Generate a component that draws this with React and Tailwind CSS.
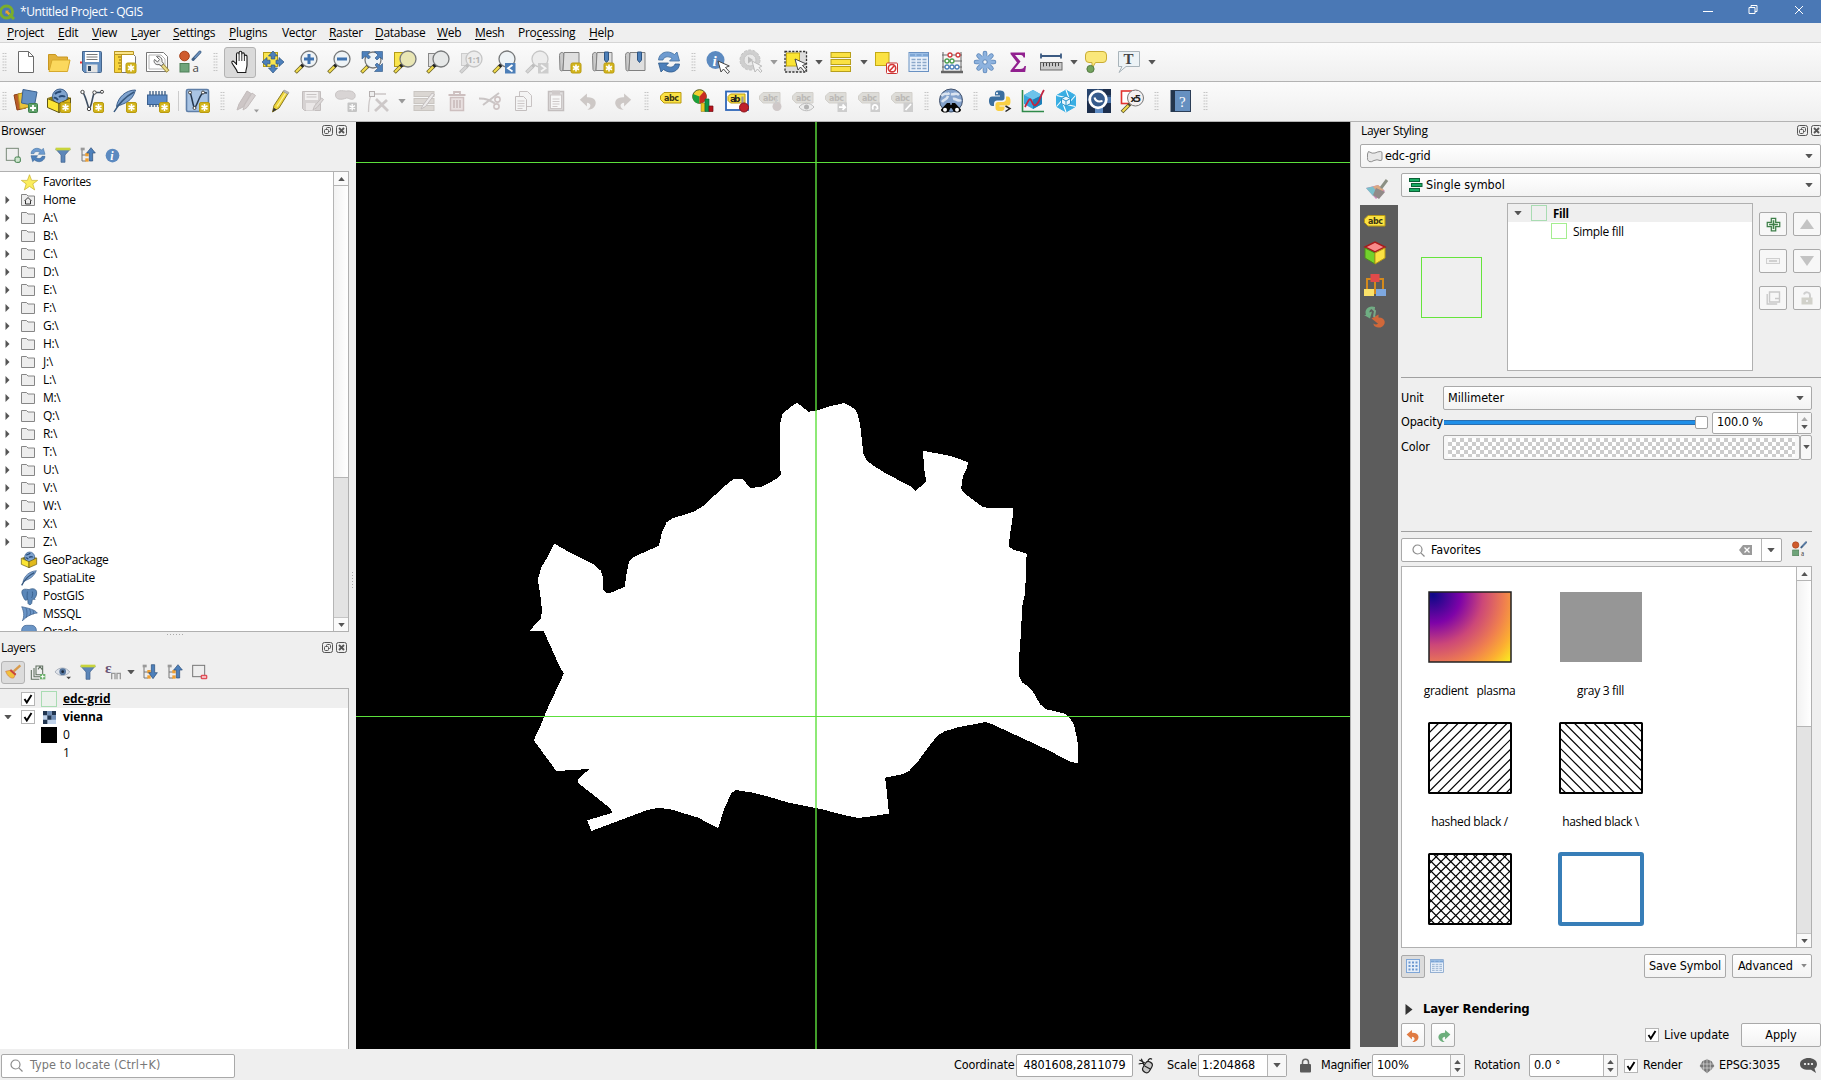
import React from "react";

const SEGOE = "font-['Open_Sans','Noto_Sans',sans-serif] [font-stretch:normal] text-[12px] tracking-[-0.3px]";
const TAHOMA = "font-['DejaVu_Sans_Condensed','DejaVu_Sans',sans-serif] [font-stretch:condensed] text-[12.5px] tracking-[-0.1px]";

const Ic = ({ children, s = 24, className = "" }) => (
  <svg width={s} height={s} viewBox="0 0 24 24" fill="none" className={`shrink-0 overflow-visible ${className}`}>
    {children}
  </svg>
);

/* ---------- shared icon parts ---------- */
const Star = ({ x = 12, y = 12 }) => (
  <g transform={`translate(${x} ${y})`}>
    <rect x="0.5" y="0.5" width="10" height="10" rx="1.5" fill="#d3b51c" stroke="#b89a10" />
    <path d="M5.5 2v7M2.5 3.7l6 3.6M8.500 3.700l-6 3.600" stroke="#fff" strokeWidth="1.6" />
  </g>
);
const GrayStar = ({ x = 13, y = 13 }) => (
  <g transform={`translate(${x} ${y})`}>
    <rect x="0.5" y="0.5" width="9.5" height="9.5" rx="1" fill="#c4c4c4" />
    <path d="M5.200 2v6.500M2.500 3.600l5.500 3.400M8 3.600l-5.500 3.400" stroke="#fff" strokeWidth="1.300" />
  </g>
);
const Lens = ({ fill = "#eef3f6", gray, cx = 15, cy = 9 }) => (
  <g>
    <path d="M9.500 14.500L7 17" stroke={gray ? "#bdbdbd" : "#222"} strokeWidth="3.600" />
    <path d="M7.500 16.500L1.500 22.500" stroke={gray ? "#bdbdbd" : "#6b6224"} strokeWidth="3.800" />
    <path d="M7.200 16.800L2 22" stroke={gray ? "#d5d5d5" : "#f2dc4e"} strokeWidth="2.200" />
    <circle cx={cx} cy={cy} r="8" fill={fill} stroke={gray ? "#c6c6c6" : "#77797a"} strokeWidth="1.300" />
  </g>
);
const Cursor = ({ x = 11, y = 10 }) => (
  <path transform={`translate(${x} ${y})`} d="M0 0l3 11 2.500-3 4 4.500 2-1.600-4-4.400 3.800-1.500z" fill="#fff" stroke="#444" />
);

/* ---------- main toolbar icons ---------- */
const NewFile = () => <Ic><path d="M4.500 1.500h10l5 5v16h-15z" fill="#fff" stroke="#6b6b6b" /><path d="M14.500 1.500v5h5" stroke="#6b6b6b" /></Ic>;
const Open = () => <Ic><path d="M1.500 20V4.500h7l2 2.500h10v4" fill="#e2b23a" stroke="#c99720" /><path d="M2 21.500L5 10h18l-2.500 11.500z" fill="#fbd85d" stroke="#d6a92c" /></Ic>;
const Save = () => <Ic><path d="M2.500 1.500h18q1 0 1 1v19q0 1-1 1H4.500l-2-2z" fill="#6690c0" stroke="#45658c" /><rect x="5" y="2" width="14" height="10" fill="#fff" /><path d="M6.500 4.500h11M6.500 7h11M6.500 9.500h11" stroke="#777" /><rect x="6.500" y="14.500" width="11" height="8" fill="#e4e4e4" /><rect x="8" y="16" width="3" height="5" fill="#28425e" /><rect x="0" y="11.500" width="2" height="2" fill="#e33" /></Ic>;
const NewLayout = () => <Ic><path d="M7.500 2.500h11l4 4v16h-15z" fill="#fff" stroke="#777" /><path d="M1.500 1.500h7v21h-7z" fill="#f7d43c" stroke="#b89520" /><path d="M1.500 1.500h19v3h-19z" fill="#fbe588" stroke="#b89520" /><path d="M5 7h3M6 10h2M5 13h3M6 16h2M5 19h3" stroke="#8a6a10" /><Star x={12.5} y={12.5} /></Ic>;
const LayoutMgr = () => <Ic><path d="M.5 2.500h17l4 4v15H.5z" fill="#fff" stroke="#777" /><path d="M3 5h12l4 4v10H3z" stroke="#b5b5b5" /><path d="M14 12.500l8 9" stroke="#9c8b3a" strokeWidth="4" /><path d="M14.500 13l7 8" stroke="#eadb8a" strokeWidth="2" /><path d="M10.500 6.500l3 3-2 2.500-3-2.500c-1.500 3 1.500 6 4.500 5l2.500 1.500 2-2.500-1.500-2c.5-3.500-2.500-6-5.500-5z" fill="#ececec" stroke="#666" /></Ic>;
const StyleMgr = ({ s = 24 }) => <Ic s={s}><circle cx="5.500" cy="6" r="4.800" fill="#cf5b2d" stroke="#a7431b" /><path d="M21 2l-7 7.500" stroke="#3f5f84" strokeWidth="3" strokeLinecap="round" /><path d="M21 2l-5 5.500" stroke="#6c92bf" strokeWidth="1.500" strokeLinecap="round" /><rect x="1" y="13.500" width="9" height="8.500" fill="#6fa47a" stroke="#4f8058" /><text x="13.500" y="22" fontSize="11.500" fill="#444" fontFamily="Open Sans">a</text></Ic>;
const Hand = () => <Ic><path d="M8.500 15V4.200c0-2 2.600-2 2.600 0V2.800c0-2 2.700-2 2.700 0v1.400c0-1.800 2.600-1.800 2.600.2v1.800c.2-1.600 2.600-1.500 2.600.4V15c0 3-1.200 4-1.200 7.500H9.500C9 19.500 5.500 16 4 13c-.8-1.700 1-2.600 2.200-1.200L8.500 14z" fill="#fff" stroke="#1a1a1a" strokeWidth="1.100" /><path d="M11.100 4v7M13.800 4v7M16.400 5.500V11" stroke="#333" /></Ic>;
const ArrowsC = "#4d80bb";
const PanSel = () => <Ic><rect x="2.500" y="2.500" width="14" height="14" fill="#f9e54e" stroke="#b39b18" /><g fill={ArrowsC} stroke="#2d5482" strokeWidth="0.700"><path d="M12 1l4.500 5h-2.700v3h-3.600V6H7.500zM12 23l4.500-5h-2.700v-3h-3.600v3H7.500zM1 12l5-4.500v2.700h3v3.600H6v2.700zM23 12l-5-4.500v2.700h-3v3.600h3v2.700z" /></g></Ic>;
const ZoomIn = () => <Ic><Lens /><path d="M15 4v10M10 9h10" stroke="#3f73b0" strokeWidth="3" /></Ic>;
const ZoomOut = () => <Ic><Lens /><path d="M10 9h10" stroke="#3f73b0" strokeWidth="3" /></Ic>;
const ZoomFull = () => <Ic><Lens cx={13} cy={10} /><g fill={ArrowsC} stroke="#2d5482" strokeWidth="0.600"><path d="M2 1.500h8L7.500 4l3 3-2 2-3-3L2 9zM22.500 1.500v8L20 7l-3 3-2-2 3-3-3.500-3.500zM22.500 21.500v-8L20 16l-3-3-2 2 3 3-3.500 3.500z" /></g></Ic>;
const ZoomSel = () => <Ic><rect x="1.500" y="2.500" width="14" height="14" fill="#f9e54e" stroke="#b39b18" /><Lens fill="#e9e6b4" /></Ic>;
const ZoomLayer = () => <Ic><rect x="2.500" y="3.500" width="13" height="13" fill="#e0e0e0" stroke="#888" /><Lens fill="#e6e8e8" /></Ic>;
const Zoom11 = () => <Ic><rect x="2.500" y="3.500" width="10" height="12" fill="#e6e6e6" stroke="#ccc" /><Lens gray fill="#ededed" /><text x="8.500" y="12.500" fontSize="9" fontWeight="700" fill="#b3b3b3" fontFamily="Open Sans">1:1</text></Ic>;
const ZoomLast = () => <Ic><Lens /><rect x="13" y="13" width="10.500" height="10.500" fill="#4d7fb8" /><path d="M20.500 15l-4.500 3.200 4.500 3.200" stroke="#fff" strokeWidth="1.800" /></Ic>;
const ZoomNext = () => <Ic><Lens gray fill="#ededed" /><rect x="13" y="13" width="10.500" height="10.500" fill="#cdcdcd" /><path d="M16 15l4.500 3.200-4.500 3.200" stroke="#f4f4f4" strokeWidth="1.800" /></Ic>;
const MapBook = ({ flag, star }) => <Ic><path d="M1.500 5.500c0-4 4.500-4 4.500-.5l-1 15c-.5 1.500-3 1-3-.5z" fill="#c9c9c9" stroke="#808080" /><path d="M6 2.500h15v18H5z" fill="#dfdfdf" stroke="#808080" />{flag && <path d="M13.500 2h4v8l-2 2.500-2-2.500z" fill="#4d7fb8" stroke="#2d5482" />}{star && <Star x={12.5} y={12.5} />}</Ic>;
const Refresh = ({ s = 24 }) => <Ic s={s}><path d="M1.500 10C2 3 10-1 17.500 4.500L20 2l2.500 9h-10L15 8.300C11 5.500 6.500 7 6 10z" fill="#6e9bd0" stroke="#41709f" strokeWidth="0.800" /><path d="M22.500 14C22 21 14 25 6.500 19.500L4 22l-2.500-9h10L9 15.700c4 2.800 8.500 1.300 9-1.700z" fill="#4d80bb" stroke="#2f5a8c" strokeWidth="0.800" /></Ic>;
const Identify = () => <Ic><circle cx="9.500" cy="10" r="9" fill="#5c8ac0" /><text x="6.500" y="15.500" fontSize="15" fontStyle="italic" fontWeight="700" fill="#fff" fontFamily="Liberation Serif">i</text><Cursor x={12} y={11} /></Ic>;
const ActionGear = () => <Ic><circle cx="11" cy="10" r="8" stroke="#cfcfcf" strokeWidth="4" /><circle cx="11" cy="10" r="10" stroke="#c0c0c0" strokeWidth="1" strokeDasharray="3 1.500" /><circle cx="11" cy="10" r="6" fill="#e9e9e9" stroke="#c4c4c4" /><path d="M9 6.500v7l5-3.500z" fill="#bbb" /><path transform="translate(13 11)" d="M0 0l3 11 2.500-3 3 3.500 1.500-1.500-3-3.400 2.800-1.500z" fill="#f4f4f4" stroke="#bbb" /></Ic>;
const SelectR = () => <Ic><rect x="1" y="1.500" width="21.500" height="20.500" fill="#ddd" stroke="#333" strokeDasharray="2.200 1.400" strokeWidth="1.300" /><rect x="2.500" y="3" width="13" height="13" fill="#fbe534" stroke="#c4aa14" /><Cursor x={11} y={9} /></Ic>;
const SelectV = () => <Ic><g fill="#fbe243" stroke="#b79f1c"><rect x="2" y="2.500" width="19.500" height="5" /><rect x="2" y="9.500" width="19.500" height="5" /><rect x="2" y="16.500" width="19.500" height="5" /></g></Ic>;
const Deselect = () => <Ic><rect x="1.500" y="2.500" width="13.500" height="13" fill="#fbe243" stroke="#c4aa14" /><rect x="12.500" y="13" width="11" height="10.500" rx="1" fill="#fff" stroke="#cb3434" /><circle cx="18" cy="18.200" r="3.700" stroke="#d43737" strokeWidth="1.600" /><path d="M20.500 15.500l-5 5.500" stroke="#d43737" strokeWidth="1.600" /></Ic>;
const Table = ({ s = 24 }) => <Ic s={s}><rect x="2" y="2.500" width="19.500" height="19" fill="#e8f0fa" stroke="#6991c2" /><rect x="2.500" y="3" width="18.500" height="4" fill="#9dbfe6" /><path d="M3 5h18" stroke="#5f8ec4" strokeDasharray="5 1.500" /><path d="M4.500 9.500h4M10 9.500h4M15.500 9.500h4M4.500 12.500h4M10 12.500h4M15.500 12.500h4M4.500 15.500h4M10 15.500h4M15.500 15.500h4M4.500 18.500h4M10 18.500h4M15.500 18.500h4" stroke="#8ba8ca" strokeWidth="1.300" /></Ic>;
const Abacus = () => <Ic><path d="M3 2v20M21 2v20M2 5h20M2 11h20M2 17h20" stroke="#666" /><path d="M1 22h22" stroke="#666" strokeWidth="2.500" /><g fill="#fff" strokeWidth="1.300"><g stroke="#cf3c3c"><circle cx="10" cy="5" r="2" /><circle cx="18" cy="5" r="2" /></g><g stroke="#4da050"><circle cx="7" cy="11" r="2" /><circle cx="12" cy="11" r="2" /></g><g stroke="#4d80bb"><circle cx="7" cy="17" r="2" /><circle cx="12" cy="17" r="2" /><circle cx="17" cy="17" r="2" /></g></g></Ic>;
const Gear = () => <Ic><g stroke="#5c86b8" strokeWidth="4.600" strokeLinecap="round"><path d="M12 3v18M3 12h18M5.600 5.600l12.800 12.800M18.400 5.600L5.600 18.400" /></g><g stroke="#8db2de" strokeWidth="3" strokeLinecap="round"><path d="M12 3v18M3 12h18M5.600 5.600l12.800 12.800M18.400 5.600L5.600 18.400" /></g><circle cx="12" cy="12" r="6.500" fill="#8db2de" /><circle cx="12" cy="12" r="2.200" fill="#f6f6f6" stroke="#5c86b8" /></Ic>;
const Sigma = () => <Ic><path d="M4.500 2.500h14.500v5h-1.500c-.5-2-1.500-2.500-4-2.500H9l5.500 6.500L8.500 19H14c3 0 4-1 4.500-3h1.500l-.8 6H4.500v-1.500L11 12.500 4.500 4z" fill="#91208f" /></Ic>;
const Ruler = () => <Ic><path d="M2 6h20M2 3.500v5M22 3.500v5" stroke="#3b5a82" strokeWidth="1.800" /><rect x="1.500" y="12.500" width="21.500" height="7.500" fill="#cacaca" stroke="#6a6a6a" /><path d="M4.500 13v3.500M7.500 13v3M10.500 13v3.500M13.500 13v3M16.500 13v3.500M19.500 13v3" stroke="#444" /></Ic>;
const MapTip = () => <Ic><path d="M5 1.500h14q3.500 0 3.500 3.500v4q0 3.500-3.500 3.500h-7.500l-3.500 6V12.500H5Q1.500 12.500 1.500 9V5Q1.500 1.500 5 1.500z" fill="#fae77a" stroke="#c9ac36" /><circle cx="6.500" cy="19" r="3.600" fill="#72a35d" stroke="#557a44" /></Ic>;
const TextAnn = () => <Ic><path d="M1.500 1.500h21v15H9l-7 6 3-6H1.500z" fill="#edf3f6" stroke="#a9b4ba" /><text x="6.500" y="14" fontSize="15" fontWeight="700" fill="#444" fontFamily="Liberation Serif">T</text></Ic>;

/* ---------- second toolbar icons ---------- */
const DataSrc = () => <Ic><path d="M0 6l9-2 3 15-9 2z" fill="#b95c28" stroke="#8d4116" /><path d="M4 5l10-2 1 15-9 2z" fill="#eac33a" stroke="#b69322" /><path d="M9 .5l14 2.500-2.500 13.500-13-2.500z" fill="#6490c3" stroke="#3c618f" /><rect x="14.500" y="14.500" width="9" height="9" rx="1" fill="#5d9f68" stroke="#3e7e4a" /><path d="M19 16v6M16 19h6" stroke="#fff" strokeWidth="1.800" /></Ic>;
const Box = ({ s = 24, star }) => <Ic s={s}><path d="M.5 9l12-4 11.500 4-12 6z" fill="#8d7812" /><circle cx="13" cy="7.500" r="7.500" fill="#7fa3ce" stroke="#3c5f8c" /><path d="M8 5c3-3 4-1 6-3M12 8c3-2 5 0 6-1M7 9c2-1 3 1 4 2" stroke="#274a75" strokeWidth="2" /><path d="M.5 9.500l11.500 5v9L.5 18.500z" fill="#fbe534" stroke="#5f5413" /><path d="M12 14.500l11.500-5.500v9.500l-11.500 5z" fill="#e0b91b" stroke="#5f5413" />{star && <Star x={13} y={13} />}</Ic>;
const VShape = () => <Ic><path d="M3 3.500C6 8 8 18 9 20 12 17 12 8 14.500 3.500h7.500" stroke="#3f4f62" strokeWidth="1.600" /><g fill="#fff" stroke="#444"><circle cx="2.500" cy="3" r="1.700" /><circle cx="9" cy="20" r="1.700" /><circle cx="14.500" cy="3.500" r="1.700" /><circle cx="22" cy="2.800" r="1.500" /></g><Star x={13} y={13} /></Ic>;
const Feather = ({ s = 24, star }) => <Ic s={s}><path d="M22.500 1C13 1 5 8 3.500 17.500c8-3 16-5 19-16.500z" fill="#7fa3cf" stroke="#3c5f8c" /><path d="M1 23C5 16 12 8 21 3" stroke="#36587f" strokeWidth="1.500" />{star && <Star x={13} y={13} />}</Ic>;
const Chip = () => <Ic><path d="M4 2v16M7 2v16M10 2v16M13 2v16M16 2v16M19 2v16" stroke="#36587f" strokeWidth="1.300" /><rect x="1.500" y="6" width="19.500" height="9.500" fill="#5c8ac4" stroke="#3a608f" /><Star x={13} y={13} /></Ic>;
const VLayer = () => <Ic><rect x=".5" y=".5" width="22" height="22" rx="1.500" fill="#a9c4e4" stroke="#5f7fa8" strokeWidth="1.600" /><path d="M4 3.500c2 4 2.500 12 4.500 15.500 3-3 4-11 8.500-15.500l4 .5" stroke="#23364e" strokeWidth="1.500" /><g fill="#fff" stroke="#444"><circle cx="4" cy="3.500" r="1.500" /><circle cx="8.500" cy="19" r="1.500" /><circle cx="17" cy="3.500" r="1.500" /></g><Star x={13} y={13} /></Ic>;
const Pencils = () => <Ic><path d="M2 21l2-6L12 2l4 2.500L8 18z" fill="#cdc6c6" stroke="#c3bcbc" /><path d="M8 21l1.500-5L17 4l3.500 2.500L12 18.500z" fill="#d6d0d0" stroke="#c3bcbc" /><path d="M19 20.500h5l-2.500 3z" fill="#999" /></Ic>;
const Pencil = () => <Ic><path d="M4.500 23l1.500-6.500L15.500 2l4.500 2.500L11 19z" fill="#eed53a" stroke="#887824" /><path d="M9 17.500L18 3.500" stroke="#fbf2a0" strokeWidth="1.300" /><path d="M4.500 23l1.200-4.200 3 1.700z" fill="#333" /><path d="M15 2.500l1.300-1.500 4.700 2.500-1 1.800z" fill="#b9b9b9" stroke="#888" strokeWidth=".5" /></Ic>;
const GSave = () => <Ic><path d="M1.500 2.500h18v19h-16l-2-2z" fill="#d6d2d2" stroke="#c3bebe" /><rect x="4" y="3" width="13" height="8" fill="#f2f0f0" /><path d="M5.500 5.500h10M5.500 8h10" stroke="#c9c5c5" /><rect x="5" y="14" width="9" height="7.500" fill="#eae7e7" /><path d="M12 21l1.500-4 7-8 2 1.500-6.500 8z" fill="#dcd8d8" stroke="#c3bebe" /></Ic>;
const Blob = () => <Ic><path d="M1.500 6c0-6 8-4 11-4 8-1 10 4 8 7-3 3-5 0-8 0-5 2-11 2-11-3z" fill="#d8d4d4" stroke="#c9c5c5" /><GrayStar /></Ic>;
const Vertex = () => <Ic><path d="M1.500 23c0-8 1-14 3-18M7 5h12" stroke="#cbc6c6" strokeWidth="1.300" /><rect x="2.500" y="2.500" width="5" height="5" fill="#eee" stroke="#b5b0b0" /><path d="M9 10l12 12M20 11L8 22" stroke="#cdc8c8" strokeWidth="2.800" /></Ic>;
const GTable = () => <Ic><g fill="#dad6d2" stroke="#c9c5c1"><rect x="2" y="2.500" width="20" height="5" /><rect x="2" y="9.500" width="20" height="5" /><rect x="2" y="16.500" width="20" height="5" /></g><path d="M9 20l2-4 9-12 2.500 1.500-9 12z" fill="#eceaea" stroke="#c3bebe" /></Ic>;
const Trash = () => <Ic><path d="M5.500 8.500h13v13h-13z" fill="#e8e0e0" stroke="#cdbfbf" strokeWidth="1.500" /><path d="M3.500 6h17M9 5.500V3h6v2.500M9 11v8M12 11v8M15 11v8" stroke="#cdbfbf" strokeWidth="1.800" /></Ic>;
const Scissors = () => <Ic><path d="M1 9.500c8 0 11 2 16 5M5 16L21 4" stroke="#cac5c5" strokeWidth="2" /><circle cx="19.500" cy="10.500" r="2.600" stroke="#cdc3c3" strokeWidth="1.600" /><circle cx="18.500" cy="17.500" r="2.600" stroke="#cdc3c3" strokeWidth="1.600" /></Ic>;
const Copy = () => <Ic><path d="M8.500 2.500h8l4 4v11h-12z" fill="#f4f4f4" stroke="#c8c3c3" /><path d="M4.500 7.500h8l3 3v11h-11z" fill="#f4f4f4" stroke="#c3bebe" /><path d="M6.500 12h7M6.500 14.500h7M6.500 17h7M6.500 19.500h5" stroke="#cec9c9" /></Ic>;
const Paste = () => <Ic><rect x="4.500" y="2.500" width="15" height="19" fill="#e0dede" stroke="#c3bebe" strokeWidth="1.500" /><rect x="6.500" y="6" width="11" height="13.500" fill="#f7f7f7" stroke="#cbc6c6" /><rect x="8" y="1.500" width="8" height="4" fill="#cfcaca" /><path d="M8.500 10h7M8.500 12.500h7M8.500 15h7M8.500 17.500h5" stroke="#cec9c9" /></Ic>;
const Undo = ({ c = "#cdc8c6", flip, s = 24 }) => <Ic s={s} className={flip ? "-scale-x-100" : ""}><path d="M1 10.500L9.500 3v4.500c9-.5 12 5 10 9.500-1.500 3.500-5 5.500-9.500 5.500 5-3 5-8-.5-8.500v4.500z" fill={c} /></Ic>;
const Tag = ({ gray, children, text = "abc", className }) => <Ic className={className}><path d="M5 6.500h17v10.500H5l-3.500-3.500v-3.500z" transform="translate(0 -3)" fill={gray ? "#dddcd8" : "#fbe243"} stroke={gray ? "#d2d0cb" : "#b99a12"} /><text x="5" y="12" fontSize="8" fontWeight="700" fill={gray ? "#bbb9b6" : "#3a3413"} fontFamily="DejaVu Sans" textLength={text.length * 5}>{text}</text>{children}</Ic>;
const Diagram = () => <Ic><circle cx="7.500" cy="7.500" r="6.800" fill="#f3cf2e" stroke="#4f5a1c" /><path d="M7.500 7.500L1 5C-.5 11.500 3.500 14.500 7.500 14.500z" fill="#1ca03a" /><path d="M7.500 7.500l4.500-5c5 4 2 12-4.500 12z" fill="#c92c22" /><path d="M9 14h4v8.500h-4z" fill="#eac520" stroke="#8a7615" strokeWidth=".5" /><path d="M13 10h4v12.500h-4z" fill="#109447" stroke="#0d6a34" strokeWidth=".7" /><path d="M17 17h4v5.500h-4z" fill="#b8121b" stroke="#6f0e13" strokeWidth=".7" /></Ic>;
const LabelPin = () => <Ic><rect x="1" y="2.500" width="22" height="18.500" fill="#fff" stroke="#2f67b8" strokeWidth="1.800" /><path d="M5.500 5H20v9H5.500L3 11.500V7.500z" fill="#fbe243" stroke="#b99a12" /><text x="5" y="12.800" fontSize="9" fontWeight="700" fill="#222" fontFamily="DejaVu Sans" textLength="10.500">ab</text><path d="M17.500 7.500v9" stroke="#999" strokeWidth="2.200" /><circle cx="19" cy="18.500" r="4.500" fill="#c0222b" stroke="#8a161d" /></Ic>;
const GlobeBino = () => <Ic><circle cx="12" cy="11.500" r="11.500" fill="#84a2cc" stroke="#41516b" /><path d="M2.500 7c4-5 5 0 8-3M3 13c2-3 5-2 6-6M12 5c4 1 5-2 8 1M14 10c3-1 5 3 8 1" stroke="#dbe4f0" strokeWidth="2.600" /><path d="M8 14h3l.5 2h1l.5-2h3l6 6.500c.5 3.500-7.500 4.500-8.500 0l-1-1.500h-1L10.500 21c-1 4-9 3-8.500-.5z" fill="#050505" /><circle cx="6" cy="20.800" r="2" fill="#fff" /><circle cx="18" cy="20.800" r="2" fill="#fff" /></Ic>;
const Python = () => <Ic><path d="M11.500 1.500c-5 0-4.500 2-4.500 5h5v1H4C1 7.500 1 11 1 12.500S2 17 4 17h2v-2.500c0-2 1.500-3 3-3h5c1.500 0 2.500-1.200 2.500-2.500V5c0-3-2.500-3.500-5-3.500z" fill="#3b6fa0" /><path d="M12 22c5 0 4.500-2 4.500-4.500h-5v-1H20c2.500 0 2.500-3 2.500-4.500S22 7.500 20 7.500h-2V10c0 2-1.500 3-3 3h-5c-1.500 0-2.500 1-2.500 2.500v3.500C7.500 21.500 9.500 22 12 22z" fill="#f9d044" /><circle cx="9" cy="4.300" r="1" fill="#fff" /><path d="M17.500 17l4.500 2.500-4.500 3" stroke="#222" strokeWidth="1.500" /></Ic>;
const Chart3 = () => <Ic><path d="M12 1l9 5v9l-9 5-9-5V6z" fill="#35a4dc" /><path d="M12 10l9-4v9l-9 5z" fill="#1b7fb8" /><path d="M12 1l9 5-9 4.500L3 6z" fill="#6cc3ea" /><path d="M1.500 1v21.500h21.500" stroke="#2f8a4a" strokeWidth="1.600" /><path d="M4 18c4-8 5-10 7-5s4 4 7-1c2-5 3-8 5-11" stroke="#c22440" strokeWidth="1.800" /></Ic>;
const Aperture = () => <Ic><path d="M12 1l9.500 5.500v11L12 23l-9.500-5.500v-11z" fill="#39aee3" stroke="#39aee3" strokeLinejoin="round" /><path d="M12 1l4 11M21.500 6.500l-8 9M21.500 17.500L10 15M12 23l-4-11M2.500 17.500l8-9M2.500 6.500L14 9" stroke="#fff" strokeWidth="1.100" /><path d="M12 7l4.500 2.500v5L12 17l-4.500-2.500v-5z" fill="#e9f6fc" stroke="#2693c8" /><path d="M7.500 9.500L12 12l4.500-2.500M12 12v5" stroke="#2693c8" /></Ic>;
const DarkClock = () => <Ic><rect width="24" height="24" fill="#29466f" /><path d="M0 12h8v12H0zM16 12h8v12h-8zM16 0h8v6h-8z" fill="#1d2f4d" /><path d="M8 16h8v8H8z" fill="#5f8cc4" /><path d="M16 8h8v6h-8z" fill="#4a74aa" /><circle cx="11" cy="10.500" r="8.300" stroke="#fff" strokeWidth="2.800" fill="#365b8c" /><path d="M7.500 8.500c1 4 4 4.500 8 3.500" stroke="#fff" strokeWidth="2" /></Ic>;
const X5 = () => <Ic><rect x="1.500" y="2" width="15" height="12.500" fill="#fff" stroke="#e2342e" strokeWidth="1.600" /><path d="M10 15l-8 8" stroke="#55502a" strokeWidth="3.800" /><path d="M8.500 16.500L2.500 22.500" stroke="#f2dc4e" strokeWidth="2.200" /><circle cx="15.500" cy="9" r="8" fill="#f4f0f0" stroke="#777" /><text x="10.500" y="12.500" fontSize="9" fontWeight="700" fill="#222" fontFamily="DejaVu Sans" textLength="10.500">x5</text></Ic>;
const Help = () => <Ic><rect x="2" y="1.500" width="19.500" height="21" fill="#6690c0" stroke="#2c3e57" /><rect x="2" y="1.500" width="4" height="21" fill="#24364d" /><text x="10" y="17.500" fontSize="15" fill="#fff" fontFamily="Liberation Serif">?</text></Ic>;
const Badge = ({ d }) => <g><rect x="13.500" y="13.500" width="9.500" height="9.500" fill="#cdcdcd" /><path d={d} stroke="#fff" strokeWidth="1.800" /></g>;

const Handle = ({ w = "w-4" }) => (
  <div className={`flex h-full shrink-0 items-center justify-center ${w}`}>
    <div className="h-[20px] w-[5px] bg-[radial-gradient(circle,#b5b5b5_0.700px,transparent_0.900px)] bg-[size:2.500px_2.860px]" />
  </div>
);
const Cell = ({ children, on }) => (
  <div className="flex h-full w-[33px] shrink-0 items-center justify-center">
    {on ? <div className="flex h-[31px] w-8 items-center justify-center rounded-[3px] border border-[#b3b3b3] bg-[#dadada]">{children}</div> : children}
  </div>
);
const Tri = ({ c = "#555", up, w = 8 }) => (
  <svg width={w} height={w / 2 + 0.5} viewBox="0 0 8 4.500" className={`shrink-0 ${up ? "rotate-180" : ""}`}><path d="M.3 0h7.400L4 4.500z" fill={c} /></svg>
);
const Drop = ({ c }) => <div className="flex h-full w-3 shrink-0 items-center justify-center pt-px"><Tri c={c} /></div>;
const cells = (...list) => list.map((el, i) => <Cell key={i}>{el}</Cell>);

const MENU = [
  ["", "P", "roject", "w-[51px]"], ["", "E", "dit", "w-[34px]"], ["", "V", "iew", "w-[39px]"], ["", "L", "ayer", "w-[42px]"],
  ["", "S", "ettings", "w-[56px]"], ["", "P", "lugins", "w-[53px]"], ["Vect", "o", "r", "w-[47px]"], ["", "R", "aster", "w-[46px]"],
  ["", "D", "atabase", "w-[62px]"], ["", "W", "eb", "w-[38px]"], ["", "M", "esh", "w-[43px]"], ["Pro", "c", "essing", "w-[71px]"], ["", "H", "elp", "w-[40px]"],
];

/* ---------- panel helpers ---------- */
const DockBtns = () => (
  <div className="flex shrink-0 gap-[3px]">
    <svg width="11" height="11" viewBox="0 0 11 11" fill="none" stroke="#555"><rect x=".5" y=".5" width="10" height="10" rx="2" /><rect x="4.500" y="2.500" width="4" height="4" rx="1" /><rect x="2.500" y="4.500" width="4" height="4" rx="1" fill="#efefef" /></svg>
    <svg width="11" height="11" viewBox="0 0 11 11" fill="none" stroke="#555"><rect x=".5" y=".5" width="10" height="10" rx="2" /><path d="M3 3l5 5M8 3L3 8" strokeWidth="1.800" /></svg>
  </div>
);
const Check = () => (
  <div className="flex h-[14px] w-[14px] shrink-0 items-center justify-center border border-[#b5b5b5] bg-white">
    <svg width="10" height="10" viewBox="0 0 10 10" fill="none"><path d="M1.500 5l2.300 3.500L8.500 1" stroke="#000" strokeWidth="1.900" /></svg>
  </div>
);
const ScrollV = ({ thumb }) => (
  <div className="flex w-[15px] shrink-0 flex-col border-l border-[#b5b5b5] bg-[#e3e3e3]">
    <div className="flex h-[14px] items-center justify-center border-b border-[#b5b5b5] bg-[#fafafa]"><Tri up w={7} /></div>
    <div className={`border-b border-[#b5b5b5] bg-gradient-to-r from-[#f2f2f2] to-white ${thumb}`} />
    <div className="flex-1" />
    <div className="flex h-[14px] items-center justify-center border-t border-[#c5c5c5] bg-[#fafafa]"><Tri w={7} /></div>
  </div>
);
const Folder = ({ home }) => (
  <svg width="16" height="16" viewBox="0 0 16 16" fill="none"><path d="M.5 13.500V2.500h5l1.500 1.500h6.500v9.500z" fill="#ededed" stroke="#868686" />{home && <path d="M3.500 9L7 5.500 10.500 9M4.500 8.500v3.500h5V8.500" stroke="#333" />}</svg>
);
const Funnel = () => <Ic s={16}><path d="M1 3h22l-8 9v11h-6V12z" fill="#5c86b8" stroke="#3c5f8c" /><path d="M1 1h22v4H1z" fill="#c8d43c" /></Ic>;
const TreeArrow = ({ up }) => <Ic s={16}><path d="M3 3v18h6M3 12h6" stroke="#777" strokeWidth="1.500" /><rect x="8" y="9" width="5" height="5" fill="#f0a030" /><rect x="8" y="17" width="5" height="5" fill="#f0a030" /><rect x="1" y="1" width="6" height="4" fill="#999" /><path d={up ? "M14 21V9h-4l6.500-8L23 9h-4v12z" : "M14 1v12h-4l6.500 9L23 13h-4V1z"} fill="#4d80bb" stroke="#274a75" /></Ic>;
const Info = () => <Ic s={15}><circle cx="12" cy="12" r="11" fill="#5c8ac0" /><text x="8.500" y="19" fontSize="19" fontStyle="italic" fontWeight="700" fill="#fff" fontFamily="Liberation Serif">i</text></Ic>;

const DRIVES = ["A", "B", "C", "D", "E", "F", "G", "H", "J", "L", "M", "Q", "R", "T", "U", "V", "W", "X", "Z"];
const TREE = [
  { t: "Favorites", i: <svg width="17" height="17" viewBox="0 0 24 24"><path d="M12 1l3 8h8.500l-6.800 5 2.600 8.500L12 17.500l-7.300 5L7.300 14 .5 9H9z" fill="#fbed5d" stroke="#c9b22c" /></svg> },
  { t: "Home", i: <Folder home />, a: true },
  ...DRIVES.map((d) => ({ t: d + ":\\", i: <Folder />, a: true })),
  { t: "GeoPackage", i: <Box s={16} /> },
  { t: "SpatiaLite", i: <Ic s={16}><path d="M23 1C13 2 5 8 3 18c6-4 15-5 20-17z" fill="#7fa3cf" stroke="#3c5f8c" /><path d="M1 23C5 15 12 8 20 4" stroke="#36587f" strokeWidth="2" /></Ic> },
  { t: "PostGIS", i: <Ic s={17}><path d="M2 3c4-3 8 0 10-1 4-2 9-1 10 3 1 5-2 9-3 10l1 1h-4l-1 6c-1 2-4 2-5 0l-.5-6c-3 2-4 2-6-3C2 10 0 6 2 3z" fill="#5b87b8" stroke="#2f557f" /><path d="M9 5c0 5-1 6 0 11M16 5c1 4 0 7-1 9" stroke="#2f557f" /></Ic> },
  { t: "MSSQL", i: <Ic s={17}><path d="M1 1c9 2 19 4 22 9-5 0-15 4-21 11 3-7 2-13-1-20z" fill="#6b95c6" stroke="#3c5f8c" /><path d="M7 3c2 5 2 9 0 14M12 4c2 4 2 7 0 10M17 6c1 3 1 4 0 6" stroke="#3c5f8c" /></Ic> },
  { t: "Oracle", i: <Ic s={16}><rect x="1" y="2" width="22" height="19" rx="7" fill="#6b95c6" stroke="#3c5f8c" /></Ic> },
];

const Browser = () => (
  <div className="flex h-[510px] flex-col">
    <div className={`flex h-[17px] items-center justify-between pl-[1px] pr-[2px] ${SEGOE}`}><span>Browser</span><DockBtns /></div>
    <div className="flex h-[32px] items-center gap-[9px] pl-[5px]">
      <Ic s={16}><rect x="2" y="2" width="18" height="18" stroke="#7a8a7a" strokeWidth="1.500" /><rect x="15" y="15" width="8" height="8" rx="2" fill="#cfe6cf" stroke="#3f7f4a" strokeWidth="1.500" /></Ic>
      <Refresh s={16} /><Funnel /><TreeArrow up /><Info />
    </div>
    <div className="flex h-[461px] border border-l-0 border-[#b0b0b0] bg-white">
      <div className="flex-1 overflow-hidden pt-[1px]">
        {TREE.map((r) => (
          <div key={r.t} className={`flex h-[18px] items-center ${SEGOE}`}>
            <div className="flex w-[21px] justify-center pr-[6px]">{r.a && <svg width="5" height="8" viewBox="0 0 5 8"><path d="M.5 0v8L4.500 4z" fill="#555" /></svg>}</div>
            <div className="flex w-[22px]">{r.i}</div>
            <span>{r.t}</span>
          </div>
        ))}
      </div>
      <ScrollV thumb="h-[292px]" />
    </div>
  </div>
);

const Layers = () => (
  <div className="flex flex-1 flex-col">
    <div className="flex h-[5px] items-center justify-center"><div className="h-[3px] w-[18px] bg-[radial-gradient(circle,#aaa_0.600px,transparent_0.800px)] bg-[size:3px_3px]" /></div>
    <div className={`flex h-[21px] items-center justify-between pl-[1px] pr-[2px] ${SEGOE}`}><span>Layers</span><DockBtns /></div>
    <div className="flex h-[30px] items-center gap-[9px] pb-[2px] pl-[1px]">
      <div className="-mr-[4px] flex h-[23px] w-6 items-center justify-center rounded-[3px] border border-[#b3b3b3] bg-[#dcdcdc]">
        <Ic s={16}><path d="M23 2l-10 9" stroke="#d99a4a" strokeWidth="3.500" /><path d="M1 11l9-2 6 6-3 6c-4 1-9-2-12-10z" fill="#f1c23c" stroke="#d07a4a" /><path d="M8 9l8 7" stroke="#c9443c" strokeWidth="3" /></Ic>
      </div>
      <Ic s={16}><path d="M2 9v14h12M6 6v13h12M9 3h10v13H9zM12 8l3-4 3 4" stroke="#5f6f5f" strokeWidth="1.600" /><rect x="15" y="15" width="8" height="8" fill="#6db06d" /><path d="M19 16v6M16 19h6" stroke="#fff" strokeWidth="1.500" /></Ic>
      <Ic s={16}><path d="M0 12c5-8 17-8 22 0-6 7-16 7-22 0z" fill="#dfe3ea" stroke="#8e99a8" /><circle cx="11.500" cy="11.500" r="5" fill="#55759d" /><circle cx="11.500" cy="11.500" r="2" fill="#1c2838" /><path d="M17 19h7l-3.500 4z" fill="#444" /></Ic>
      <Funnel />
      <Ic s={16}><text x="0" y="14" fontSize="23" fill="#6b5575" fontFamily="Liberation Serif" fontWeight="700">ε</text><path d="M10 23v-9h5v9M18 23v-9h5v9" stroke="#999" strokeWidth="2" /></Ic>
      <div className="-ml-[3px] -mr-[2px] flex w-2"><Tri /></div>
      <TreeArrow /><TreeArrow up />
      <Ic s={16}><rect x="1" y="2" width="18" height="17" stroke="#777" strokeWidth="1.500" fill="#eee" /><rect x="13" y="16" width="10" height="7" rx="2" fill="#e0505a" /><path d="M15 19.500h6" stroke="#fff" strokeWidth="1.800" /></Ic>
    </div>
    <div className={`flex-1 border border-b-0 border-l-0 border-[#b0b0b0] bg-white ${SEGOE}`}>
      <div className="flex h-[19px] items-center bg-[#efefef] pl-[21px]"><Check /><div className="ml-[6px] mr-[6px] h-4 w-4 border border-[#a9dcb2] bg-[#ecf1ec]" /><b className="tracking-[-0.1px] underline">edc-grid</b></div>
      <div className="flex h-[18px] items-center pl-[4px]">
        <div className="mr-[9px] flex"><Tri /></div><Check />
        <svg width="13" height="13" viewBox="0 0 12 12" className="ml-[8px] mr-[7px]"><rect width="12" height="12" fill="#bfd2ea" /><path d="M0 0h4v4H0zM8 0h4v4H8zM4 4h4v4H4zM0 8h4v4H0z" fill="#223650" /><path d="M4 0h4v4H4zM8 4h4v4H8z" fill="#6e8cb4" /></svg>
        <b className="tracking-[-0.1px]">vienna</b>
      </div>
      <div className="flex h-[18px] items-center pl-[41px]"><div className="mr-[6px] h-4 w-4 bg-black" />0</div>
      <div className="flex h-[18px] items-center pl-[63px]">1</div>
    </div>
  </div>
);

const VIENNA =
  "M762 68L780 83 792 95 812 93 843 81 887 69 904 78 917 88 924 104 930 130 934 170 939 220 947 240 962 254 1000 281 1063 318 1078 332 1104 308 1105 296 1100 262 1098 212 1170 228 1217 246 1215 262 1204 288 1199 325 1206 338 1256 381 1282 385 1337 384 1336 410 1328 470 1326 500 1336 508 1373 521 1369 640 1361 680 1358 760 1353 830 1354 890 1361 907 1376 918 1390 936 1410 974 1426 988 1475 1001 1490 1018 1499 1035 1506 1070 1510 1100 1510 1151 1490 1145 1420 1105 1280 1032 1265 1026 1190 1042 1155 1054 1136 1067 1110 1104 1085 1143 1060 1174 1045 1182 997 1193 1002 1240 1007 1301 960 1309 925 1314 890 1306 830 1288 740 1268 690 1251 640 1237 600 1230 588 1240 570 1285 553 1344 545 1340 500 1313 430 1289 395 1283 365 1290 330 1305 216 1353 205 1321 271 1299 268 1287 230 1252 181 1209 181 1197 211 1167 123 1173 64 1082 66 1072 80 1040 100 985 143 881 130 855 90 754 52 752 82 716 85 690 80 640 74 600 82 565 100 530 118 491 160 518 225 555 241 572 246 590 247 628 257 639 271 637 305 620 310 580 316 545 328 531 396 497 403 460 416 427 430 416 490 394 512 379 570 319 595 296 617 297 640 324 670 320 712 294 719 284 718 130 724 103 740 86z";

const MapCanvas = () => (
  <div className="relative h-[927px] w-[994px] shrink-0 overflow-hidden bg-black">
    <svg className="absolute left-[154px] top-[258px]" width="590" height="470" viewBox="0 0 1568 1410" preserveAspectRatio="none" shapeRendering="crispEdges"><path d={VIENNA} fill="#fff" /></svg>
    <div className="absolute left-0 top-[40px] h-px w-full bg-[#5ce03c]" />
    <div className="absolute left-0 top-[594px] h-px w-full bg-[#5ce03c]" />
    <div className="absolute left-[459px] top-0 h-full w-[2px] bg-[#5ce03c]/70" />
  </div>
);

/* ---------- layer styling ---------- */
const boxCls = "border border-[#a9a9a9] rounded-[2px]";
const grad = "bg-gradient-to-b from-white to-[#f3f3f3]";
const Combo = ({ children, className }) => (
  <div className={`flex h-6 items-center justify-between pr-[7px] ${boxCls} ${grad} ${TAHOMA} ${className}`}>
    <div className="flex items-center">{children}</div><Tri />
  </div>
);
const SqBtn = ({ children }) => <div className={`flex h-6 w-7 items-center justify-center ${boxCls} bg-[#f7f7f7]`}>{children}</div>;
const Spin = ({ children, className, dimUp }) => (
  <div className={`flex shrink-0 bg-white ${boxCls} ${TAHOMA} ${className}`}>
    <div className="flex flex-1 items-center pl-[4px]">{children}</div>
    <div className="flex w-[14px] flex-col items-center justify-center gap-[4px] border-l border-[#b5b5b5] bg-[#f7f7f7]"><Tri up w={7} c={dimUp ? "#aaa" : "#555"} /><Tri w={7} /></div>
  </div>
);
const SearchI = () => <svg width="13" height="13" viewBox="0 0 13 13" fill="none" stroke="#8b8b8b" strokeWidth="1.200" className="shrink-0"><circle cx="5.500" cy="5.500" r="4.500" /><path d="M8.800 8.800l3.700 3.700" /></svg>;
const Hatch = ({ dir }) => {
  const n = Array.from({ length: 18 }, (_, i) => i * 9.8);
  return (
    <svg width="84" height="72" viewBox="0 0 84 72" fill="none" stroke="#000">
      <svg x="1" y="1" width="82" height="70" overflow="hidden">
        {dir !== "\\" && n.map((k) => <path key={k} d={`M${k} 0L${k - 80} 80`} strokeWidth="1.200" />)}
        {dir !== "/" && n.map((k) => <path key={"b" + k} d={`M${k - 74} 0L${k + 6} 80`} strokeWidth="1.200" />)}
      </svg>
      <rect x="1" y="1" width="82" height="70" strokeWidth="2" rx=".5" />
    </svg>
  );
};
const Item = ({ children, label }) => (
  <div className="flex h-[131px] w-[131px] flex-col items-center">
    <div className="flex h-[74px] items-center">{children}</div>
    {label && <div className={`mt-[18px] whitespace-pre ${SEGOE}`}>{label}</div>}
  </div>
);

const Styling = () => (
  <div className="flex h-[927px] w-[471px] shrink-0 flex-col overflow-hidden border-l border-[#b0b0b0] pl-[9px]">
    <div className={`flex h-[18px] shrink-0 items-center justify-between pl-[1px] ${SEGOE}`}><span>Layer Styling</span><div className="-mr-[1px] pb-px"><DockBtns /></div></div>
    <Combo className="mt-[4px] shrink-0 pl-[5px]">
      <svg width="17" height="13" viewBox="0 0 17 13"><path d="M2.500 1.500q4 2.500 6.500 1.500 3-1.500 5.500-1.500 1.500 0 1.500 1.500v6q0 2-2 1.500-3-1.500-6 0-3 2-5 1-2-1.500-1.500-4-.5-4 1-6z" fill="#e8e8e8" stroke="#8f8f8f" /></svg>
      <span className="ml-[2px]">edc-grid</span>
    </Combo>
    <div className="flex min-h-0 flex-1 pt-[5px]">
      <div className="flex w-[38px] shrink-0 flex-col">
        <div className="flex h-[32px] items-center justify-center pr-1">
          <Ic s={24}><path d="M1 11l12-3 7 6-9 8z" fill="#c987b8" /><path d="M1 11l7-1.500 5 6.500-5 3z" fill="#7cc0cc" /><path d="M8 9.500L13 8l6 5-6 3z" fill="#dba983" /><path d="M22 3l-6 8" stroke="#8b9084" strokeWidth="3" /><path d="M11 11l9 4-6 7-6-4z" fill="#918a88" /></Ic>
        </div>
        <div className="mb-[2px] flex flex-1 flex-col items-center gap-2 bg-[#5c5c5c] pr-2 pt-[4px]">
          <Tag className="-mb-[3px] mt-[3px]" /><Ic><path d="M2 6l10-5 10 5-10 5z" fill="#f98a8a" stroke="#a81c1c" strokeWidth="1.500" /><path d="M2 7l10 5v11L2 17z" fill="#73d12c" stroke="#4d8a1c" /><path d="M22 7l-10 5v11l10-6z" fill="#fbe243" stroke="#b99a12" /></Ic>
          <Ic><path d="M4 17V6h16v11M12 8v12h5" stroke="#d48a1c" strokeWidth="2" /><rect x="7.500" y="1" width="9" height="8" fill="#e04a4a" /><rect x="1" y="16" width="10" height="7" fill="#fbe26a" /><rect x="13" y="16" width="10" height="7" fill="#7ea8e0" /></Ic>
          <Ic><path d="M12 2c-6-2-11 2-9 8l-2 0 6 3.500 2-7-2.500 1c-.5-2.500 2.500-4.500 5.500-3.500z" fill="#6fae83" /><path d="M8.500 13.500l7-4v3c8 0 8 8 2 10-6 0-7-2-7-4 2 2 6 1 5-3v3.500z" fill="#d0683a" /><path d="M9 3l3 3-1 6" stroke="#79a888" strokeWidth="2" /></Ic>
        </div>
      </div>
      <div className="ml-[3px] flex flex-1 flex-col">
        <Combo className="shrink-0 pl-[7px]">
          <svg width="14" height="14" viewBox="0 0 14 14" fill="#1aab62" stroke="#0c6136"><rect x=".5" y=".5" width="10" height="3" /><rect x="2.500" y="5.500" width="10.500" height="3" /><rect x=".5" y="10.500" width="10" height="3" /></svg>
          <span className="ml-[3px] tracking-normal">Single symbol</span>
        </Combo>
        <div className="flex h-[181px] shrink-0 border-b border-[#a0a0a0] pt-[6px]">
          <div className="flex w-[106px] justify-center pr-[5px] pt-[54px]"><div className="h-[61px] w-[61px] border border-[#66e43c]" /></div>
          <div className={`h-[168px] w-[246px] border border-[#b0b0b0] bg-white ${SEGOE}`}>
            <div className="flex h-[18px] items-center bg-[#efefef] pl-[6px]"><Tri /><div className="ml-[9px] mr-[6px] h-4 w-4 border border-[#a9dcb2]" /><b className="pt-px text-[11.500px]">Fill</b></div>
            <div className="flex h-[18px] items-center pl-[43px]"><div className="mr-[6px] h-4 w-4 border border-[#a4ee90]" /><span className="pt-px">Simple fill</span></div>
          </div>
          <div className="ml-[6px] mt-[9px] grid h-[98px] grid-cols-[28px_28px] gap-x-[6px] gap-y-[13px]">
            <SqBtn><Ic s={15}><path d="M8.500 2h7v6.500H22v7h-6.500V22h-7v-6.500H2v-7h6.500z" fill="#e9f5e9" stroke="#3f7f4a" strokeWidth="2" /><path d="M12 5v14M5 12h14" stroke="#3f7f4a" strokeWidth="2.500" /></Ic></SqBtn>
            <SqBtn><svg width="14" height="10" viewBox="0 0 14 10"><path d="M0 10h14L7 0z" fill="#c3c3c3" /></svg></SqBtn>
            <SqBtn><svg width="14" height="6" viewBox="0 0 14 6"><rect x=".5" y=".5" width="13" height="5" fill="#f3f3f3" stroke="#cfcfcf" /><path d="M3 3h8" stroke="#c4c4c4" strokeWidth="1.500" /></svg></SqBtn>
            <SqBtn><svg width="14" height="10" viewBox="0 0 14 10"><path d="M0 0h14L7 10z" fill="#c3c3c3" /></svg></SqBtn>
            <SqBtn><svg width="15" height="14" viewBox="0 0 15 14" fill="none" stroke="#c9c9c9" strokeWidth="1.400"><path d="M3.500 1h10v10h-10zM1.200 3v10h10M9 7.500h4.500" /></svg></SqBtn>
            <SqBtn><svg width="14" height="14" viewBox="0 0 14 14" fill="none"><path d="M4 3.500c1-3 6-3 6 1V7" stroke="#cfcfcf" strokeWidth="2" /><rect x="1.500" y="6.500" width="11" height="7" fill="#d1d1ca" /><rect x="6" y="9" width="2" height="2" fill="#eee" /></svg></SqBtn>
          </div>
        </div>
        <div className={`mr-[9px] flex flex-1 flex-col ${TAHOMA}`}>
          <div className="mt-[8px] flex h-6 items-center"><span className="w-[42px]">Unit</span><Combo className="flex-1 pl-[4px] tracking-normal">Millimeter</Combo></div>
          <div className="mt-[1px] flex h-[23px] items-center">
            <span className="w-[43px] whitespace-nowrap tracking-[-0.2px]">Opacity</span>
            <div className="h-[5px] w-[251px] border-y border-[#2a6fb0] bg-[#1f8fe8]" />
            <div className="h-[13px] w-[13px] rounded-[2px] border border-[#a0a0a0] bg-white" />
            <Spin className="ml-[4px] h-[22px] w-[100px]" dimUp>100.0 %</Spin>
          </div>
          <div className="flex h-[26px] items-center">
            <span className="w-[42px]">Color</span>
            <div className={`h-[25px] w-[357px] p-[4px] pt-[2px] ${boxCls} bg-[#f7f7f7]`}><div className="h-[19px] bg-[conic-gradient(#ccc_25%,#fff_0_50%,#ccc_0_75%,#fff_0)] bg-[size:8px_8px]" /></div>
            <div className={`flex h-[25px] w-[12px] items-center justify-center ${boxCls} bg-[#f7f7f7]`}><Tri w={7} /></div>
          </div>
          <div className="mt-[71px] h-px shrink-0 bg-[#a0a0a0]" />
          <div className="mt-[6px] flex h-6 shrink-0 items-center">
            <div className={`flex h-6 w-[381px] items-center bg-white pl-[10px] ${boxCls}`}>
              <SearchI /><span className="ml-[6px] flex-1">Favorites</span>
              <svg width="13" height="10" viewBox="0 0 13 10"><path d="M4 0h9v10H4L0 5z" fill="#9a9a9a" /><path d="M5.500 2.500l5 5M10.500 2.500l-5 5" stroke="#fff" strokeWidth="1.300" /></svg>
              <div className="ml-[9px] flex h-full w-[20px] items-center justify-center border-l border-[#b5b5b5] pr-px"><Tri /></div>
            </div>
            <div className="mb-[2px] ml-[10px]"><StyleMgr s={16} /></div>
          </div>
          <div className="mt-[4px] flex h-[382px] shrink-0 border border-[#b0b0b0] bg-white">
            <div className="grid flex-1 auto-rows-[131px] grid-cols-[131px_131px] content-start pl-[2px] pt-[23px]">
              <Item label="gradient   plasma"><svg width="84" height="72"><defs><radialGradient id="plasma" gradientUnits="userSpaceOnUse" cx="5" cy="4" r="100"><stop offset="0" stopColor="#0d0887" /><stop offset=".28" stopColor="#7e03a8" /><stop offset=".5" stopColor="#cc4778" /><stop offset=".72" stopColor="#f0804e" /><stop offset=".87" stopColor="#fcaf31" /><stop offset="1" stopColor="#f9e622" /></radialGradient></defs><rect x="1" y="1" width="82" height="70" fill="url(#plasma)" stroke="#222" strokeWidth="1.500" /></svg></Item>
              <Item label="gray 3 fill"><div className="h-[70px] w-[82px] bg-[#969696]" /></Item>
              <Item label="hashed black /"><Hatch dir="/" /></Item>
              <Item label="hashed black \"><Hatch dir="\" /></Item>
              <Item><Hatch dir="x" /></Item>
              <Item><div className="h-[74px] w-[86px] rounded-[3px] border-[4px] border-[#377eb8]" /></Item>
            </div>
            <ScrollV thumb="h-[146px]" />
          </div>
          <div className="mt-[6px] flex h-6 shrink-0 items-center">
            <div className={`flex h-[23px] w-6 items-center justify-center bg-[#dcdcdc] ${boxCls}`}><svg width="14" height="14" viewBox="0 0 14 14"><rect width="14" height="14" fill="#e6eef8" stroke="#7ea6d8" strokeWidth="2" /><path d="M2.500 3.500h10M2.500 7h10M2.500 10.500h10" stroke="#6d98cf" strokeWidth="2" strokeDasharray="2 1.500" /></svg></div>
            <div className="ml-[4px]"><Table s={16} /></div>
            <div className="flex-1" />
            <div className={`flex h-6 w-[82px] items-center justify-center whitespace-nowrap ${grad} ${boxCls}`}>Save Symbol</div>
            <div className={`ml-[6px] flex h-6 w-[80px] items-center justify-between pl-[5px] pr-[4px] ${grad} ${boxCls}`}>Advanced<Tri w={6} c="#888" /></div>
          </div>
          <div className="mt-[20px] flex h-[22px] shrink-0 items-center pl-[4px]"><svg width="8" height="11" viewBox="0 0 8 11"><path d="M.5 0v11L7.500 5.500z" fill="#333" /></svg><b className="ml-[10px] text-[13px] tracking-[-0.120px]">Layer Rendering</b></div>
          <div className="-mr-[9px] mt-[3px] flex h-6 shrink-0 items-center">
            <div className={`flex h-6 w-6 items-center justify-center ${grad} ${boxCls}`}><Undo c="#e07b42" s={15} /></div>
            <div className={`ml-[6px] flex h-6 w-6 items-center justify-center ${grad} ${boxCls}`}><Undo c="#6cae7c" s={15} flip /></div>
            <div className="flex-1" />
            <Check /><span className="ml-[5px] w-[77px]">Live update</span>
            <div className={`flex h-6 w-[80px] items-center justify-center ${grad} ${boxCls}`}>Apply</div>
          </div>
        </div>
      </div>
    </div>
  </div>
);

const Status = () => (
  <div className={`flex h-[31px] items-center whitespace-nowrap pt-[2px] ${TAHOMA}`}>
    <div className={`ml-[1px] flex h-6 w-[234px] shrink-0 items-center bg-white pl-[8px] text-[#777] ${boxCls}`}><SearchI /><span className="ml-[7px] tracking-[0.130px]">Type to locate (Ctrl+K)</span></div>
    <span className="ml-[719px] w-[62px] shrink-0">Coordinate</span>
    <div className={`flex h-[23px] w-[117px] shrink-0 items-center justify-center bg-white ${boxCls}`}>4801608,2811079</div>
    <Ic s={16} className="ml-[5px]"><rect x="9" y="5" width="11" height="17" rx="5" fill="#c8c8c8" stroke="#222" strokeWidth="1.800" transform="rotate(30 14 13)" /><path d="M2 3l8 4M1 9l9-2M10 12l9 5M15 5c0-4 4-5 6-3M5 1l4 10" stroke="#222" strokeWidth="1.800" /></Ic>
    <span className="ml-[13px] w-[31px] shrink-0">Scale</span>
    <div className={`flex h-[23px] w-[89px] shrink-0 items-center bg-white pl-[3px] ${boxCls}`}><span className="flex-1">1:204868</span><div className="flex h-full w-[19px] items-center justify-center border-l border-[#b5b5b5] bg-[#f7f7f7]"><Tri /></div></div>
    <svg width="13" height="15" viewBox="0 0 13 15" fill="none" className="ml-[12px] shrink-0"><path d="M3.500 7V4.500c0-4.500 6-4.500 6 0V7" stroke="#666" strokeWidth="1.500" /><rect x="1" y="6" width="11" height="8.500" rx="1" fill="#5a5a5a" /></svg>
    <span className="ml-[9px] w-[51px] shrink-0 tracking-[-0.3px]">Magnifier</span>
    <Spin className="h-[23px] w-[93px]">100%</Spin>
    <span className="ml-[9px] w-[55px] shrink-0">Rotation</span>
    <Spin className="h-[23px] w-[89px]">0.0 °</Spin>
    <div className="ml-[6px] flex"><Check /></div>
    <span className="ml-[5px] w-[56px] shrink-0">Render</span>
    <Ic s={16}><path d="M12 2l7 3 4 7-4 5-7 6-7-6-4-5 4-7z" fill="#777" /><path d="M2 9h20M2 15h20M12 1v22M7 5v14M17 5v14" stroke="#ddd" /></Ic>
    <span className="ml-[4px]">EPSG:3035</span>
    <svg width="17" height="15" viewBox="0 0 17 15" className="ml-[20px] shrink-0"><path d="M8.500 0C13 0 17 2.500 17 6c0 2-1 3.500-2.500 4.500L16 15l-5-3.300C4 12.500 0 10 0 6c0-3.500 4-6 8.500-6z" fill="#555" /><circle cx="5" cy="6" r="1.100" fill="#fff" /><circle cx="8.500" cy="6" r="1.100" fill="#fff" /><circle cx="12" cy="6" r="1.100" fill="#fff" /></svg>
  </div>
);

export default function App() {
  return (
    <div className="flex h-[1080px] w-[1821px] flex-col overflow-hidden bg-[#efefef] text-black">
      <div className={`flex h-[23px] shrink-0 items-center bg-[#4a78b5] text-white ${SEGOE}`}>
        <svg width="16" height="16" viewBox="0 0 16 16" fill="none" className="shrink-0"><circle cx="6.500" cy="8" r="6" stroke="#7aae2c" strokeWidth="2.800" /><path d="M7 8l7 7" stroke="#7aae2c" strokeWidth="3" /><path d="M5.500 6.500h3.500l-1 1 2 2-1.500 1.500-2-2-1 1z" fill="#f0a030" /></svg>
        <span className="ml-[4px] flex-1 tracking-[-0.380px]">*Untitled Project - QGIS</span>
        <svg width="102" height="11" viewBox="0 0 102 11" fill="none" stroke="#fff" className="mb-[2px] mr-[17px]"><path d="M1 6.500h10M47 2.500h6v6h-6zM49 2.500v-2h6v6h-2M93 1l8 8M101 1l-8 8" /></svg>
      </div>
      <div className={`flex h-[19px] shrink-0 items-center pl-[7px] pt-px ${SEGOE}`}>
        {MENU.map(([a, u, b, w]) => <div key={a + u + b} className={`${w} shrink-0 whitespace-nowrap`}>{a}<u className="underline-offset-2">{u}</u>{b}</div>)}
      </div>
      <div className="flex h-[40px] shrink-0 items-center border-b border-t border-b-[#b3b3b3] border-t-[#d5d5d5] bg-gradient-to-b from-[#fbfbfb] to-[#efefef]">
        <Handle w="w-[9.500px]" />
        {cells(<NewFile />, <Open />, <Save />, <NewLayout />, <LayoutMgr />, <StyleMgr />)}
        <Handle /><Cell on><Hand /></Cell>
        {cells(<PanSel />, <ZoomIn />, <ZoomOut />, <ZoomFull />, <ZoomSel />, <ZoomLayer />, <Zoom11 />, <ZoomLast />, <ZoomNext />, <MapBook star />, <MapBook star flag />, <MapBook flag />, <Refresh />)}
        <Handle />{cells(<Identify />, <ActionGear />)}<Drop c="#999" />
        <Cell><SelectR /></Cell><Drop /><Cell><SelectV /></Cell><Drop />
        {cells(<Deselect />, <Table />, <Abacus />, <Gear />, <Sigma />, <Ruler />)}<Drop />
        {cells(<MapTip />, <TextAnn />)}<Drop />
      </div>
      <div className="flex h-[40px] shrink-0 items-center border-b border-[#b3b3b3] bg-gradient-to-b from-[#fbfbfb] to-[#efefef] pb-px">
        <Handle w="w-[9.500px]" />
        {cells(<DataSrc />, <Box star />, <VShape />, <Feather star />, <Chip />)}
        <div className="mx-[3px] h-5 w-px bg-[#ccc]" /><Cell><VLayer /></Cell>
        <Handle />{cells(<Pencils />, <Pencil />, <GSave />, <Blob />, <Vertex />)}<Drop c="#999" />
        {cells(<GTable />, <Trash />, <Scissors />, <Copy />, <Paste />, <Undo s={20} />, <Undo s={20} flip />)}
        <Handle />
        {cells(<Tag />, <Diagram />, <LabelPin />,
          <Tag gray><circle cx="19" cy="17.500" r="4.500" fill="#cfc8c8" /><path d="M18 8v7" stroke="#ccc" strokeWidth="2" /></Tag>,
          <Tag gray><path d="M8 18c4-5 11-5 15 0-4 5-11 5-15 0z" fill="#ececec" stroke="#bbb" /><circle cx="15.500" cy="18" r="2.500" fill="#b3b3b3" /></Tag>,
          <Tag gray><Badge d="M15 18.200h6M18.500 15.500l2.700 2.700-2.700 2.700" /></Tag>,
          <Tag gray><Badge d="M16 20.500c-2-6 5-6 4.500-1l-2 1" /></Tag>,
          <Tag gray><Badge d="M15.500 21l5.500-6" /></Tag>)}
        <Handle /><Cell><GlobeBino /></Cell><Handle />
        {cells(<Python />, <Chart3 />, <Aperture />, <DarkClock />, <X5 />)}
        <Handle /><Cell><Help /></Cell><Handle />
      </div>
      <div className="flex h-[927px] shrink-0">
        <div className="flex w-[349px] shrink-0 flex-col"><Browser /><Layers /></div>
        <div className="flex w-[7px] shrink-0 items-center justify-center"><div className="mb-[12px] h-[18px] w-[3px] bg-[radial-gradient(circle,#aaa_0.600px,transparent_0.800px)] bg-[size:3px_3px]" /></div>
        <MapCanvas />
        <Styling />
      </div>
      <Status />
    </div>
  );
}
